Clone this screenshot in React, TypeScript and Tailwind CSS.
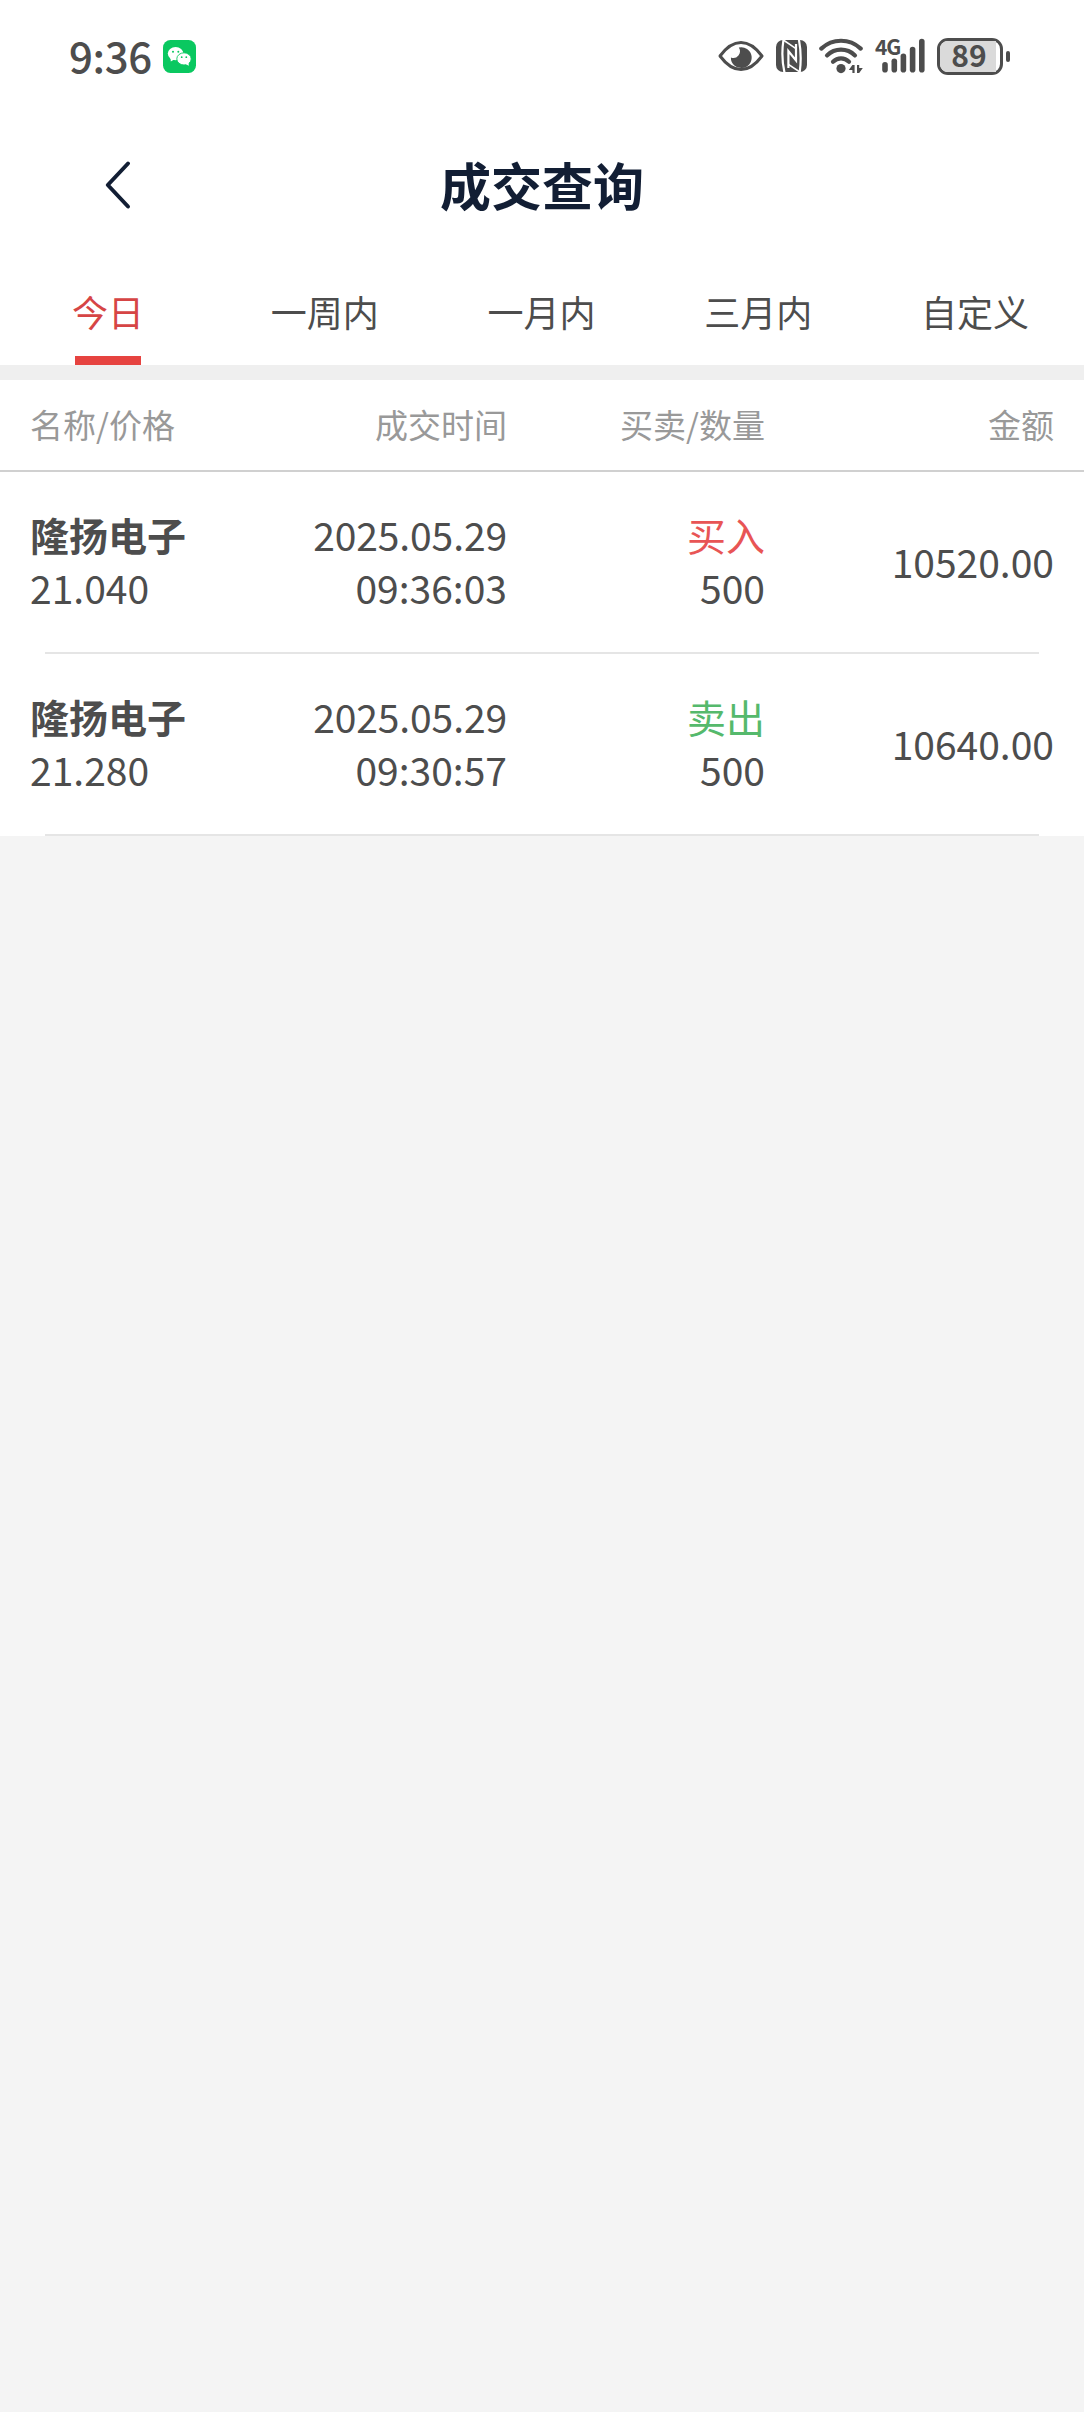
import React, {useState} from "react";

type Trade = {
	id: number;
	name: string;
	price: string;
	date: string;
	time: string;
	side: 'buy' | 'sell';
	count: number;
	amount: string;
};

const tabs = ['今日', '一周内', '一月内', '三月内', '自定义'];

const trades: Trade[] = [
	{ id: 1, name: '隆扬电子', price: '21.040', date: '2025.05.29', time: '09:36:03', side: 'buy', count: 500, amount: '10520.00' },
	{ id: 2, name: '隆扬电子', price: '21.280', date: '2025.05.29', time: '09:30:57', side: 'sell', count: 500, amount: '10640.00' },
];

function WechatIcon() {
	return (
		<svg className="w-[33px] h-[33px]" viewBox="0 0 33 33">
			<rect width="33" height="33" rx="7.5" fill="#0ac860" />
			<ellipse cx="12.6" cy="13.6" rx="7.8" ry="6.6" fill="#fff" />
			<path d="M7.5 17.5L7.8 21.6L12 19z" fill="#fff" />
			<ellipse cx="21" cy="18.9" rx="7.2" ry="6.1" fill="#fff" stroke="#0ac860" strokeWidth="0.9" />
			<path d="M22.5 24L25.8 25.8L25.6 22z" fill="#fff" />
			<g fill="#0ac860">
				<circle cx="10" cy="11.8" r="1" />
				<circle cx="15.3" cy="11.8" r="1" />
				<circle cx="18.7" cy="17.2" r="0.9" />
				<circle cx="23.3" cy="17.2" r="0.9" />
			</g>
		</svg>
	);
}

function EyeIcon() {
	return (
		<svg className="w-[46px] h-[32px]" viewBox="0 0 46 32">
			<path d="M2 16C9 6.5 15.5 2.5 23 2.5S37 6.5 44 16C37 25.5 30.5 29.5 23 29.5S9 25.5 2 16z" fill="none" stroke="#4d4d4d" strokeWidth="3" strokeLinejoin="round" />
			<path d="M20.8 7.6A10.4 10.4 0 1 1 12.9 17.4A6.6 6.6 0 0 0 20.8 7.6z" fill="#4d4d4d" />
		</svg>
	);
}

function NfcIcon() {
	return (
		<svg className="w-[31px] h-[32px]" viewBox="0 0 31 32">
			<rect width="31" height="32" rx="7" fill="#4d4d4d" />
			<g fill="none" stroke="#fff" strokeWidth="2.2">
				<path d="M7.6 -1C5.8 10 6 22 8.6 33" />
				<path d="M22.8 -1C25 10 25.2 22 23.6 33" />
				<path d="M12.4 28V11L20 20.4V4" />
				<path d="M7.4 0L19.6 8.4" strokeWidth="1.6" />
				<path d="M12.4 24.4L23.8 32" strokeWidth="1.6" />
			</g>
		</svg>
	);
}

function WifiIcon() {
	return (
		<svg className="w-[44px] h-[36px]" viewBox="0 0 44 36">
			<g fill="none" stroke="#4d4d4d" strokeWidth="4.2" strokeLinecap="round">
				<path d="M2.3 10.6C13.5 0.1 30.5 0.1 41.7 10.6" />
				<path d="M8 17.4C16 9.8 28 9.8 36 17.4" />
				<path d="M14 23.8C18.7 19.2 25.3 19.2 30 23.8" />
			</g>
			<circle cx="22" cy="30.6" r="4.6" fill="#4d4d4d" />
			<path d="M29.8 32L33.4 27H35.6V35H33.4V32zM43.8 30L40.2 35H38V27H40.2V30z" fill="#4d4d4d" />
		</svg>
	);
}

function SignalIcon() {
	return (
		<div className="relative w-[50px] h-[36px]">
			<span className="absolute left-0 -top-[2px] text-[21px] leading-[20px] font-bold tracking-[-1.2px]">4G</span>
			<svg className="w-[50px] h-[36px]" viewBox="0 0 50 36">
				<g stroke="#4d4d4d" strokeWidth="5.6" strokeLinecap="round">
					<path d="M10 26.8V31.8" />
					<path d="M19.3 23.2V31.8" />
					<path d="M28.4 18.4V31.8" />
					<path d="M37.6 11.6V31.8" />
					<path d="M46.8 3.6V31.8" />
				</g>
			</svg>
		</div>
	);
}

function Battery({ level }: { level: number }) {
	return (
		<div className="flex items-center gap-[3px]">
			<div className="relative w-[66px] h-[37px] rounded-[11px] border-[3px] border-[#4d4d4d]">
				<div className="h-full rounded-l-[8px] bg-[#dadada]" style={{ width: `${level + 4}%` }} />
				<span className="absolute -left-[1px] -top-[10px] w-[60px] text-center text-[30px] leading-[46px] font-bold">{level}</span>
			</div>
			<div className="w-[4px] h-[11px] rounded-[2px] bg-[#4d4d4d]" />
		</div>
	);
}

function StatusBar() {
	return (
		<div className="h-[112px] pl-[69px] pr-[74px] flex items-center justify-between text-[#4d4d4d]">
			<div className="flex items-center gap-[11px]">
				<span className="-mt-[3px] text-[42px] leading-[60px] font-medium tracking-[-0.4px]">9:36</span>
				<WechatIcon />
			</div>
			<div className="flex items-center">
				<EyeIcon />
				<div className="ml-[12px]"><NfcIcon /></div>
				<div className="ml-[12px]"><WifiIcon /></div>
				<div className="ml-[12px]"><SignalIcon /></div>
				<div className="ml-[12px]"><Battery level={89} /></div>
			</div>
		</div>
	);
}

function TradeRow({ trade }: { trade: Trade }) {
	return (
		<li>
			<div className="grid grid-cols-[217px_260px_258px_1fr] items-center h-[180px] pb-[2px] px-[30px] text-[39px] leading-[53px] text-[#4d4d4d]">
				<div className="flex flex-col">
					<span className="font-bold">{trade.name}</span>
					<span>{trade.price}</span>
				</div>
				<div className="flex flex-col text-right">
					<span className="tracking-[-0.1px]">{trade.date}</span>
					<span>{trade.time}</span>
				</div>
				<div className="flex flex-col text-right">
					<span className={trade.side === 'buy' ? 'text-[#e85555]' : 'text-[#55b96c]'}>{trade.side === 'buy' ? '买入' : '卖出'}</span>
					<span>{trade.count}</span>
				</div>
				<span className="text-right">{trade.amount}</span>
			</div>
			<div className="mx-[45px] h-[2px] bg-[#e5e5e5]" />
		</li>
	);
}

export default function App() {
	const [tab, setTab] = useState(tabs[0]);

	return (
		<div className="w-full h-[2412px] bg-[#f4f4f4] font-['Noto_Sans_CJK_SC',sans-serif]">
			<header className="bg-white">
				<StatusBar />
				<div className="relative flex items-center justify-center h-[148px] pb-[4px]">
					<button className="absolute left-[104px] top-[48px]">
						<svg className="w-[28px] h-[50px]" viewBox="0 0 28 50" fill="none" stroke="#121e34" strokeWidth="4" strokeLinecap="round" strokeLinejoin="round">
							<path d="M24 3.5L3.8 25L24 46.5" />
						</svg>
					</button>
					<h1 className="text-[51px] leading-none font-bold text-[#121e34]">成交查询</h1>
				</div>
				<nav className="grid grid-cols-5 h-[105px]">
					{
						tabs.map((t) =>
							<button
								key={t}
								className={`${t === tab ? 'text-[#d64545]' : 'text-[#4d4d4d]'} flex flex-col items-center justify-between text-[36px] leading-[53px] pt-[25px] cursor-pointer`}
								onClick={() => setTab(t)}
							>
								<span className="-ml-[1px]">{t}</span>
								<div className={`${t === tab ? 'bg-[#e64340]' : 'bg-transparent'} w-[66px] h-[9px]`} />
							</button>
						)
					}
				</nav>
			</header>
			<div className="h-[15px] bg-[#efefef]" />
			<main className="bg-white">
				<div className="grid grid-cols-[217px_260px_258px_1fr] items-center h-[92px] px-[30px] border-b-2 border-[#d0d0d0] text-[33px] text-[#999999]">
					<span>名称/价格</span>
					<span className="text-right">成交时间</span>
					<span className="text-right">买卖/数量</span>
					<span className="text-right">金额</span>
				</div>
				<ul>
					{trades.map((trade) => <TradeRow key={trade.id} trade={trade} />)}
				</ul>
			</main>
		</div>
	);
}
